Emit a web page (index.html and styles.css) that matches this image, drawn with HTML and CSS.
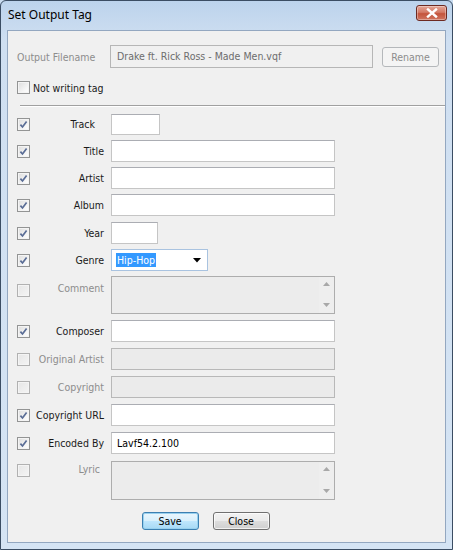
FILE: index.html
```html
<!DOCTYPE html>
<html>
<head>
<meta charset="utf-8">
<link rel="stylesheet" href="styles.css">
</head>
<body>
<div class="window">
  <div class="titlebar">
    <span class="title">Set Output Tag</span>
    <div class="close-btn">
      <svg width="12" height="10" viewBox="0 0 12 10"><path d="M2 1.5 L10 8.5 M10 1.5 L2 8.5" stroke="#fff" stroke-width="2.4" stroke-linecap="square"/></svg>
    </div>
  </div>
  <div class="client">
    <div class="file-row">
      <span class="file-label">Output Filename</span>
      <div class="file-field">Drake ft. Rick Ross - Made Men.vqf</div>
      <div class="btn btn-disabled rename">Rename</div>
    </div>
    <div class="notag-row">
      <span class="cb"></span>
      <span class="notag-label">Not writing tag</span>
    </div>
    <div class="separator"></div>

    <div class="tags">
      <div class="row">
        <span class="cb checked"><svg viewBox="0 0 13 13"><path d="M3.4 6.6 L5.5 9 L9.6 3.4" fill="none" stroke="#5a6d96" stroke-width="1.7"/></svg></span>
        <span class="label label-track">Track</span>
        <div class="field w-track"></div>
      </div>
      <div class="row">
        <span class="cb checked"><svg viewBox="0 0 13 13"><path d="M3.4 6.6 L5.5 9 L9.6 3.4" fill="none" stroke="#5a6d96" stroke-width="1.7"/></svg></span>
        <span class="label">Title</span>
        <div class="field w-full"></div>
      </div>
      <div class="row">
        <span class="cb checked"><svg viewBox="0 0 13 13"><path d="M3.4 6.6 L5.5 9 L9.6 3.4" fill="none" stroke="#5a6d96" stroke-width="1.7"/></svg></span>
        <span class="label">Artist</span>
        <div class="field w-full"></div>
      </div>
      <div class="row">
        <span class="cb checked"><svg viewBox="0 0 13 13"><path d="M3.4 6.6 L5.5 9 L9.6 3.4" fill="none" stroke="#5a6d96" stroke-width="1.7"/></svg></span>
        <span class="label">Album</span>
        <div class="field w-full"></div>
      </div>
      <div class="row row-year">
        <span class="cb checked"><svg viewBox="0 0 13 13"><path d="M3.4 6.6 L5.5 9 L9.6 3.4" fill="none" stroke="#5a6d96" stroke-width="1.7"/></svg></span>
        <span class="label">Year</span>
        <div class="field w-year"></div>
      </div>
      <div class="row">
        <span class="cb checked"><svg viewBox="0 0 13 13"><path d="M3.4 6.6 L5.5 9 L9.6 3.4" fill="none" stroke="#5a6d96" stroke-width="1.7"/></svg></span>
        <span class="label">Genre</span>
        <div class="select">
          <span class="sel-text">Hip-Hop</span>
          <svg class="sel-arrow" width="8" height="5" viewBox="0 0 8 5"><path d="M0 0 H8 L4 4.5 Z" fill="#000"/></svg>
        </div>
      </div>
      <div class="row row-area row-comment">
        <span class="cb disabled"></span>
        <span class="label label-disabled">Comment</span>
        <div class="area">
          <div class="scroll">
            <svg width="7" height="4" viewBox="0 0 7 4"><path d="M0 4 H7 L3.5 0 Z" fill="#a8a8a8"/></svg>
            <svg width="7" height="4" viewBox="0 0 7 4"><path d="M0 0 H7 L3.5 4 Z" fill="#a8a8a8"/></svg>
          </div>
        </div>
      </div>
    </div>

    <div class="tags tags2">
      <div class="row">
        <span class="cb checked"><svg viewBox="0 0 13 13"><path d="M3.4 6.6 L5.5 9 L9.6 3.4" fill="none" stroke="#5a6d96" stroke-width="1.7"/></svg></span>
        <span class="label">Composer</span>
        <div class="field w-full"></div>
      </div>
      <div class="row">
        <span class="cb disabled"></span>
        <span class="label label-disabled">Original Artist</span>
        <div class="field w-full field-disabled"></div>
      </div>
      <div class="row">
        <span class="cb disabled"></span>
        <span class="label label-disabled">Copyright</span>
        <div class="field w-full field-disabled"></div>
      </div>
      <div class="row">
        <span class="cb checked"><svg viewBox="0 0 13 13"><path d="M3.4 6.6 L5.5 9 L9.6 3.4" fill="none" stroke="#5a6d96" stroke-width="1.7"/></svg></span>
        <span class="label">Copyright URL</span>
        <div class="field w-full"></div>
      </div>
      <div class="row">
        <span class="cb checked"><svg viewBox="0 0 13 13"><path d="M3.4 6.6 L5.5 9 L9.6 3.4" fill="none" stroke="#5a6d96" stroke-width="1.7"/></svg></span>
        <span class="label">Encoded By</span>
        <div class="field w-full"><span class="field-text">Lavf54.2.100</span></div>
      </div>
      <div class="row row-area row-lyric">
        <span class="cb disabled"></span>
        <span class="label label-disabled label-lyric">Lyric</span>
        <div class="area">
          <div class="scroll">
            <svg width="7" height="4" viewBox="0 0 7 4"><path d="M0 4 H7 L3.5 0 Z" fill="#a8a8a8"/></svg>
            <svg width="7" height="4" viewBox="0 0 7 4"><path d="M0 0 H7 L3.5 4 Z" fill="#a8a8a8"/></svg>
          </div>
        </div>
      </div>
    </div>

    <div class="buttons">
      <div class="btn btn-default">Save</div>
      <div class="btn">Close</div>
    </div>
  </div>
</div>
</body>
</html>
```

FILE: styles.css
```css
html, body {
  margin: 0;
  padding: 0;
  background: #c9dcf0;
}

.window {
  width: 453px;
  height: 550px;
  box-sizing: border-box;
  border: 1px solid #3b4d63;
  border-radius: 6px 6px 0 0;
  background: linear-gradient(to bottom, #bcd3ec 0px, #cfdff1 40px, #d5e4f4 100%);
  padding: 0 6px 6px 6px;
  display: flex;
  flex-direction: column;
  font-family: "DejaVu Sans Condensed", "DejaVu Sans", sans-serif;
  font-stretch: condensed;
  font-size: 10.5px;
  color: #1a1a1a;
}

.titlebar {
  height: 29px;
  display: flex;
  align-items: center;
  justify-content: space-between;
  flex-shrink: 0;
}

.title {
  font-family: "Noto Sans", "Open Sans", sans-serif;
  font-stretch: normal;
  font-size: 12px;
  color: #000;
  padding-left: 1px;
  margin-top: -2px;
}

.close-btn {
  width: 31px;
  height: 16px;
  box-sizing: border-box;
  border: 1px solid #6d2a22;
  border-radius: 3px;
  background: linear-gradient(to bottom, #e4a697 0%, #d47a66 45%, #c4543c 55%, #cf7560 100%);
  display: flex;
  align-items: center;
  justify-content: center;
  margin-top: -6px;
  margin-right: -1px;
  box-shadow: inset 0 0 0 1px rgba(255,255,255,0.35);
}

.client {
  flex: 1;
  background: #f0f0f0;
  border: 1px solid #93a7c0;
  display: flex;
  flex-direction: column;
  padding-left: 9px;
}

/* Output filename row */
.file-row {
  display: flex;
  align-items: center;
  margin-top: 14px;
  height: 23px;
}

.file-label {
  color: #8d8d8d;
  width: 93px;
}

.file-field {
  width: 263px;
  height: 23px;
  box-sizing: border-box;
  border: 1px solid #b6b6b6;
  background: #f0f0f0;
  color: #6d6d6d;
  padding-left: 6px;
  line-height: 21px;
  font-size: 10.5px;
}

.btn {
  width: 57px;
  height: 18px;
  box-sizing: border-box;
  border: 1px solid #707070;
  border-radius: 3px;
  background: linear-gradient(to bottom, #f2f2f2 0%, #ebebeb 48%, #dddddd 52%, #cfcfcf 100%);
  text-align: center;
  line-height: 16px;
  color: #000;
  box-shadow: inset 0 0 0 1px rgba(255,255,255,0.7);
}

.btn-disabled {
  border-color: #b5b8bb;
  background: #f4f4f4;
  color: #8d8d8d;
  box-shadow: none;
}

.rename {
  margin-left: 9px;
  height: 20px;
  line-height: 18px;
}

.notag-row {
  display: flex;
  align-items: center;
  margin-top: 13px;
  height: 13px;
}

.notag-label {
  margin-left: 3px;
}

.separator {
  margin: 11px 0 0 3px;
  width: 425px;
  height: 1px;
  background: #a0a0a0;
  border-bottom: 1px solid #fff;
}

/* checkboxes */
.cb {
  width: 13px;
  height: 13px;
  box-sizing: border-box;
  border: 1px solid #939494;
  background: linear-gradient(135deg, #dcdcdc 0%, #f7f7f7 70%, #ffffff 100%);
  box-shadow: inset 0 0 0 1px #f4f4f4;
  flex-shrink: 0;
  display: block;
  position: relative;
}

.cb svg {
  width: 13px;
  height: 13px;
  position: absolute;
  left: -1px;
  top: -1px;
}

.cb.disabled {
  border-color: #b1b1b1;
  background: linear-gradient(135deg, #e6e6e6 0%, #f4f4f4 100%);
}

/* tag rows */
.tags {
  display: flex;
  flex-direction: column;
  gap: 5px;
  margin-top: 6px;
}

.tags2 {
  gap: 6px;
  margin-top: 6px;
}

.row {
  display: flex;
  align-items: center;
  min-height: 22px;
}

.row-year {
  margin-top: 1px;
}

.label {
  width: 74px;
  text-align: right;
  margin-right: 7px;
  white-space: nowrap;
  flex-shrink: 0;
}

.label-track {
  width: 65px;
  margin-right: 16px;
}

.label-disabled {
  color: #8d8d8d;
}

.field {
  height: 22px;
  box-sizing: border-box;
  border: 1px solid #c5c5c5;
  border-top-color: #abadb3;
  background: #fff;
  display: flex;
  align-items: center;
}

.field-disabled {
  background: #ebebeb;
  border-color: #b8b8b8;
}

.field-text {
  padding-left: 5px;
  font-size: 10.5px;
  color: #000;
}

.w-full { width: 224px; }
.w-track { width: 49px; height: 21px; }
.w-year { width: 47px; }

.select {
  width: 97px;
  height: 22px;
  box-sizing: border-box;
  border: 1px solid #a9c3e0;
  background: #fff;
  display: flex;
  align-items: center;
  justify-content: space-between;
  padding: 0 6px 0 4px;
}

.sel-text {
  background: #3399ff;
  color: #fff;
  padding: 0 1px;
  line-height: 14px;
  font-size: 10.5px;
}

.row-area {
  align-items: flex-start;
}

.row-comment .cb {
  margin-top: 8px;
}

.row-comment .label {
  margin-top: 6px;
}

.row-lyric .cb {
  margin-top: 4px;
}

.row-lyric .label {
  margin-top: 3px;
}

.label-lyric {
  width: 70px;
  margin-right: 11px;
}

.area {
  width: 224px;
  height: 39px;
  box-sizing: border-box;
  border: 1px solid #adadad;
  background: #ececec;
  display: flex;
  justify-content: flex-end;
}

.row-comment .area {
  height: 38px;
}

.row-lyric .area {
  margin-top: 1px;
}

.scroll {
  width: 15px;
  display: flex;
  flex-direction: column;
  justify-content: space-between;
  align-items: center;
  padding: 5px 0 6px;
  background: #eeeeee;
}

.buttons {
  display: flex;
  justify-content: center;
  gap: 14px;
  margin-top: 12px;
  margin-left: -9px;
  padding-right: 42px;
}

.btn-default {
  border-color: #3c7fb1;
  background: linear-gradient(to bottom, #eaf6fd 0%, #d9f0fc 48%, #bee6fd 52%, #a7d9f5 100%);
  box-shadow: inset 0 0 0 1px #98d1ef;
}
```
